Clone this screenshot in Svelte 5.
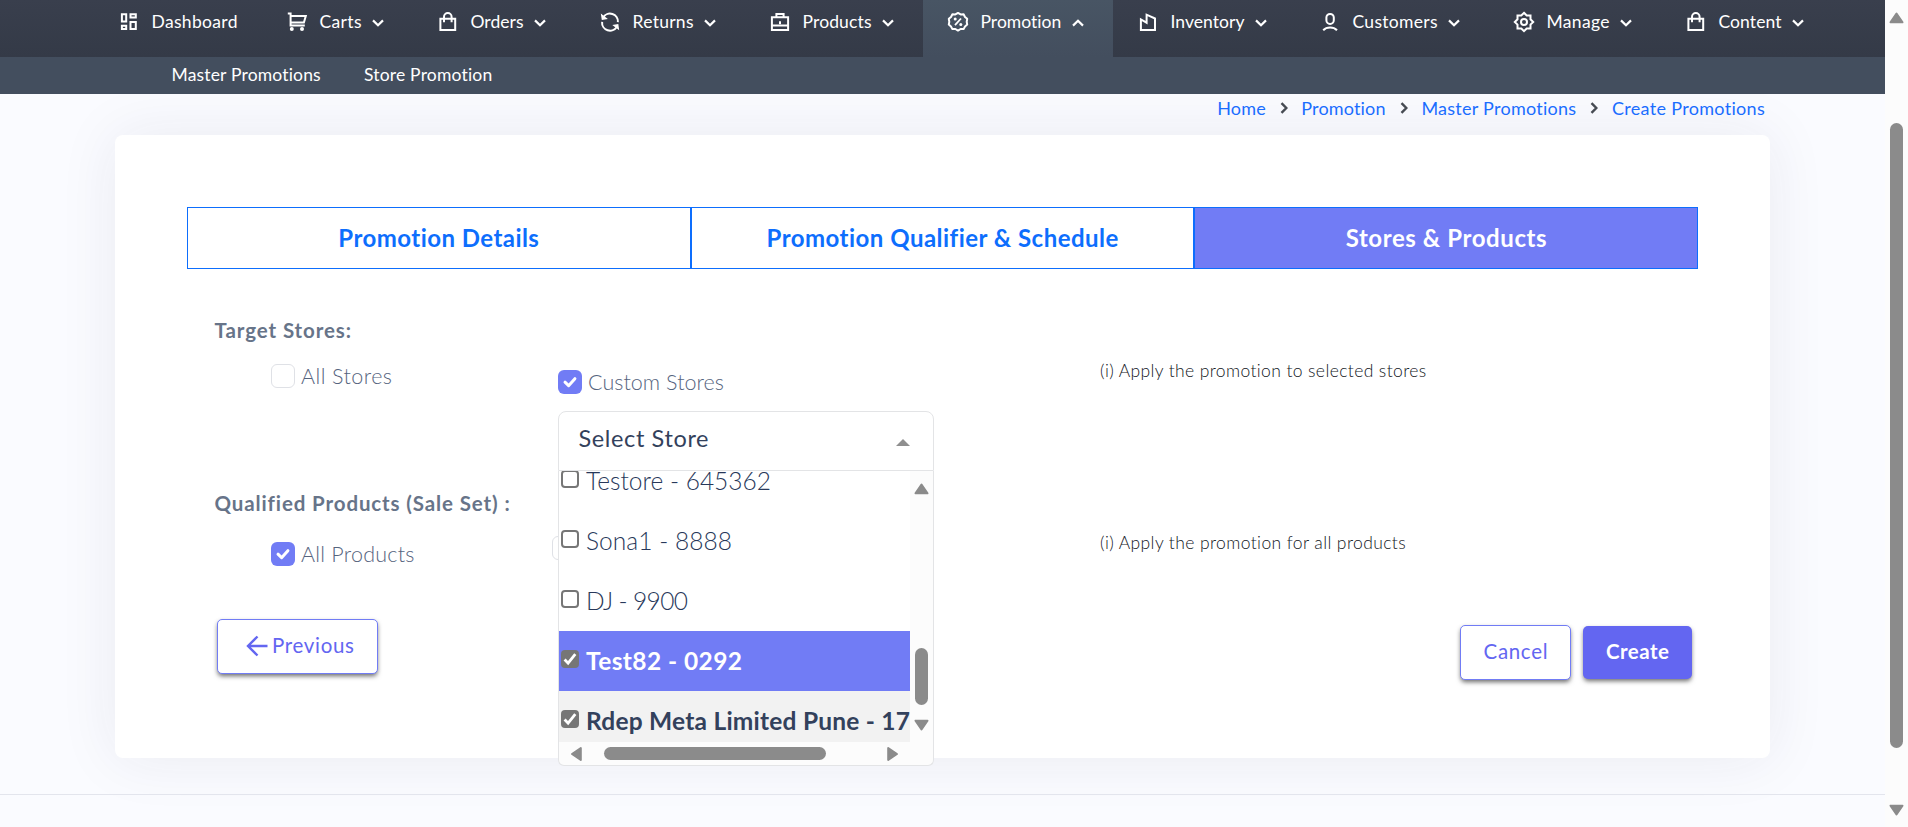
<script>
  const menu = [
    { name: 'Dashboard', icon: 'dashboard', cell: 168, text: 86 },
    { name: 'Carts', icon: 'cart', cell: 151, text: 42, more: true },
    { name: 'Orders', icon: 'bag', cell: 162, text: 53, more: true },
    { name: 'Returns', icon: 'returns', cell: 170, text: 61, more: true },
    { name: 'Products', icon: 'case', cell: 178, text: 69, more: true },
    { name: 'Promotion', icon: 'badge', cell: 190, text: 81, more: true, active: true },
    { name: 'Inventory', icon: 'factory', cell: 182, text: 74, more: true },
    { name: 'Customers', icon: 'user', cell: 194, text: 85, more: true },
    { name: 'Manage', icon: 'gear', cell: 172, text: 63, more: true },
    { name: 'Content', icon: 'bag', cell: 172, text: 63, more: true }
  ];
  const submenu = [
    { name: 'Master Promotions', text: 149.5 },
    { name: 'Store Promotion', text: 128.5 }
  ];
  const crumbs = [
    { name: 'Home', text: 48.5 },
    { name: 'Promotion', text: 84.5 },
    { name: 'Master Promotions', text: 155 },
    { name: 'Create Promotions', text: 153 }
  ];
  const tabs = [
    { name: 'Promotion Details', text: 201 },
    { name: 'Promotion Qualifier & Schedule', text: 352 },
    { name: 'Stores & Products', text: 201, active: true }
  ];
  const stores = [
    { name: 'Testore - 645362', text: 185 },
    { name: 'Sona1 - 8888', text: 146 },
    { name: 'DJ - 9900', text: 102 },
    { name: 'Test82 - 0292', text: 156, checked: true, hot: true },
    { name: 'Rdep Meta Limited Pune - 17', text: 324, checked: true }
  ];

  // Tracks the letters of a label out to the given width.
  function track(node, width) {
    const range = document.createRange();
    range.selectNodeContents(node);
    const natural = range.getBoundingClientRect().width;
    const gaps = node.textContent.length - 1;
    node.style.letterSpacing = ((width - natural) / gaps).toFixed(3) + 'px';
    node.style.width = width + 'px';
  }
</script>

{#snippet label(name, width)}<span class="label" use:track={width}>{name}</span>{/snippet}

{#snippet icon(kind)}
  <svg class="icon" viewBox="0 0 22 22" width="22" height="22" fill="none" stroke="#fff" stroke-width="2">
    {#if kind === 'dashboard'}
      <path d="M3.9 3.3h4.3v7.2H3.900zM12.500 3.300h5.300v3.300h-5.300zM3.900 14.800h4.300v3.200H3.900zM12.500 10.900h5.300v7.100h-5.300z" />
    {:else if kind === 'cart'}
      <path d="M1.8 2.400h2.800v12.100h14.200M5 5h14.800l-1.900 6.600H5" />
      <circle cx="5.800" cy="18.100" r="2" fill="#fff" stroke="none" />
      <circle cx="16" cy="18.100" r="2" fill="#fff" stroke="none" />
    {:else if kind === 'bag'}
      <path d="M3.400 7.700h14.800v11.400H3.400zM7 11.300V5.900a3.800 3.800 0 0 1 7.600 0v5.400" />
    {:else if kind === 'returns'}
      <path d="M4.100 6.400A8 8 0 0 1 18.900 11.200M17.900 15.800A8 8 0 0 1 3.100 10.900" />
      <path d="M1.800 2.500l1 6.500 6.100-1.100zM20.200 19.300l-.9-6.300-6 1z" fill="#fff" stroke="none" />
    {:else if kind === 'case'}
      <path d="M2.900 6.200h16.200v12.900H2.900zM7.400 6V2.900h7.200V6M3 14.400h16" />
      <path d="M11 10.200v3" />
    {:else if kind === 'badge'}
      <path d="M11 1.900l2.600 1.500 3-.1 1.400 2.700 2.200 1.800-.5 3 .5 2.800-2.200 1.900-1.400 2.600-3-.1L11 19.600 8.400 18l-3 .1L4 15.500l-2.200-1.900.5-2.800-.5-3L4 6l1.400-2.700 3 .1z" stroke-linejoin="round" />
      <path d="M14 7.500l-6 6.600" stroke-width="1.800" />
      <circle cx="8.200" cy="8" r="1.500" fill="#fff" stroke="none" />
      <circle cx="13.800" cy="13.600" r="1.500" fill="#fff" stroke="none" />
    {:else if kind === 'factory'}
      <path d="M3.900 19.100V8.400l5.700 3.300V3.700l8.400 3.800v11.600z" />
    {:else if kind === 'user'}
      <rect x="7.400" y="2.900" width="7.400" height="10" rx="3.600" />
      <path d="M4.200 19.300c3.500-3.700 10.300-3.700 13.800 0" />
    {:else}
      <path d="M11 1.800l2.700 2.700h3.800v3.800l2.700 2.700-2.700 2.600v3.900h-3.800L11 20.100l-2.700-2.600H4.500v-3.900L1.800 11l2.700-2.700V4.500h3.800z" />
      <circle cx="11" cy="10.900" r="3" />
    {/if}
  </svg>
{/snippet}

{#snippet box(checked)}
  <span class="box" class:on={checked}>
    {#if checked}
      <svg viewBox="0 0 24 24" width="24" height="24"><path d="M7 12.200l3.600 3.500 6.300-7" fill="none" stroke="#fff" stroke-width="3" stroke-linecap="round" stroke-linejoin="round" /></svg>
    {/if}
  </span>
{/snippet}

{#snippet arrow(dir)}
  <svg class="arrow {dir}" viewBox="0 0 15 12" width="15" height="12"><path d="M7.500 1.500L13.500 10.300H1.500z" fill="#8b8b8b" stroke="#8b8b8b" stroke-width="2" stroke-linejoin="round" /></svg>
{/snippet}

<div class="page">
  <div class="content">
    <nav class="menu">
      {#each menu as m}
        <a class="item" class:active={m.active} style:width="{m.cell}px">
          {@render icon(m.icon)}
          {@render label(m.name, m.text)}
          {#if m.more}
            <svg class="chev" class:up={m.active} viewBox="0 0 12 8" width="12" height="8"><path d="M1 1.400l5 4.800 5-4.800" fill="none" stroke="#fff" stroke-width="2.200" /></svg>
          {/if}
        </a>
      {/each}
    </nav>
    <nav class="submenu">
      {#each submenu as s}{@render label(s.name, s.text)}{/each}
    </nav>

    <div class="crumbs">
      {#each crumbs as c, i}
        {#if i}
          <svg viewBox="0 0 8 12" width="8" height="12"><path d="M1.500 1.200L6.300 6l-4.800 4.800" fill="none" stroke="#464b53" stroke-width="2.400" /></svg>
        {/if}
        {@render label(c.name, c.text)}
      {/each}
    </div>

    <main class="card">
      <div class="tabs">
        {#each tabs as t}
          <div class="tab" class:active={t.active}>{@render label(t.name, t.text)}</div>
        {/each}
      </div>

      <section class="targets">
        <h4>{@render label('Target Stores:', 136.500)}</h4>
        <div class="options">
          <div class="choice first">{@render box(false)}{@render label('All Stores', 91)}</div>
          <div class="custom">
            <div class="choice">{@render box(true)}{@render label('Custom Stores', 136)}</div>
            <div class="select">
              <div class="head">
                {@render label('Select Store', 130)}
                <i class="caret"></i>
              </div>
              <div class="drop">
                <div class="list">
                  {#each stores as s}
                    <div class="store" class:checked={s.checked} class:hot={s.hot}>
                      <span class="tick">
                        {#if s.checked}
                          <svg viewBox="0 0 18 18" width="18" height="18"><path d="M3.600 9.600l3.500 3.600 7.200-9" fill="none" stroke="#fff" stroke-width="2.800" /></svg>
                        {/if}
                      </span>
                      {@render label(s.name, s.text)}
                    </div>
                  {/each}
                </div>
                <div class="vbar">{@render arrow('up')}<i></i>{@render arrow('down')}</div>
                <div class="hbar">{@render arrow('left')}<i></i>{@render arrow('right')}</div>
              </div>
            </div>
          </div>
          <p>{@render label('(i) Apply the promotion to selected stores', 326.500)}</p>
        </div>
      </section>

      <section class="products">
        <h4>{@render label('Qualified Products (Sale Set) :', 295)}</h4>
        <div class="options">
          <div class="choice first">{@render box(true)}{@render label('All Products', 113.500)}</div>
          <div class="custom">{@render box(false)}</div>
          <p>{@render label('(i) Apply the promotion for all products', 306)}</p>
        </div>
      </section>

      <div class="actions">
        <button class="previous">
          <svg viewBox="0 0 22 22" width="22" height="22"><path d="M21.500 11H2M11.500 1.500L2 11l9.500 9.500" fill="none" stroke="#6366f1" stroke-width="2.400" /></svg>
          {@render label('Previous', 82)}
        </button>
        <button class="cancel">{@render label('Cancel', 64)}</button>
        <button class="create">{@render label('Create', 63)}</button>
      </div>
    </main>
    <footer></footer>
  </div>
  <aside class="scroll">{@render arrow('up')}<i></i>{@render arrow('down')}</aside>
</div>

<style>
  :global(body) { margin: 0; overflow: hidden; }
  .page, .page * { box-sizing: border-box; }
  .page { display: flex; width: 1908px; height: 827px; overflow: hidden; font-family: Lato, "Open Sans", sans-serif; background: #fafbff; }
  .content { width: 1885px; display: flex; flex-direction: column; }
  .label { display: inline-block; white-space: nowrap; flex: none; }

  .menu { height: 57px; flex: none; display: flex; padding-left: 94px; background: linear-gradient(#393f4d, #343a47); position: relative; z-index: 2; }
  .item { display: flex; align-items: flex-start; padding: 11px 0 0 24px; color: #fff; font-size: 17.5px; line-height: 22px; }
  .item.active { background: linear-gradient(#485564, #434e5e); }
  .icon { flex: none; margin-right: 11.5px; }
  .chev { flex: none; margin: 8px 0 0 10.5px; }
  .chev.up { transform: rotate(180deg); }
  .submenu { height: 37px; flex: none; display: flex; gap: 43px; padding-left: 171.5px; background: #434e5e; color: #fff; font-size: 17.5px; line-height: 35px; position: relative; z-index: 2; }

  .crumbs { height: 41px; flex: none; display: flex; align-items: center; justify-content: flex-end; gap: 13.8px; padding: 0 120px 14px 0; color: #1a6dff; font-size: 18px; position: relative; z-index: 1; }

  .card { width: 1655px; height: 623px; flex: none; margin-left: 115px; padding: 72px 72px 0 72px; background: #fff; border-radius: 8px; box-shadow: 0 0 60px rgba(40, 40, 80, 0.08); }
  .tabs { display: grid; grid-template-columns: repeat(3, 1fr); height: 62px; }
  .tab { border: 1px solid #0d6efd; display: flex; align-items: center; justify-content: center; padding-bottom: 2px; color: #0d6efd; font-size: 24px; font-weight: 700; }
  .tab.active { background: #717cf5; color: #fff; }

  section { padding-left: 27.5px; }
  .targets { margin-top: 49px; height: 172px; }
  .products { height: 129px; padding-top: 1px; }
  h4 { margin: 0; height: 23px; font-size: 20.5px; line-height: 24px; font-weight: 700; color: #677489; }
  .options { display: grid; grid-template-columns: 343.5px 542px 1fr; align-items: start; }
  .choice { display: flex; gap: 6px; height: 24px; font-size: 21.5px; line-height: 25px; font-weight: 300; color: #56647e; }
  .targets .first { margin: 23px 0 0 56.5px; }
  .targets .custom { margin-top: 29px; }
  .products .first { margin: 28px 0 0 56.5px; }
  .products .custom { margin: 22px 0 0 -6px; }
  .box { display: block; flex: none; width: 24px; height: 24px; border: 1px solid #dfe1e6; border-radius: 6px; background: #fff; }
  .box.on { border: 0; background: #717cf5; }
  .box svg { display: block; }
  p { margin: 20px 0 0; font-size: 17.5px; line-height: 20px; font-weight: 300; color: #12161c; }
  .products p { margin-top: 19px; }

  .select { position: relative; width: 376px; margin-top: 17px; }
  .head { height: 60px; display: flex; align-items: flex-start; justify-content: space-between; padding: 11px 23px 0 19.5px; border: 1px solid #e3e4e6; border-radius: 8px 8px 0 0; font-size: 23.5px; line-height: 30px; color: #33415c; background: #fff; }
  .caret { margin-top: 16px; border: 7px solid transparent; border-top: 0; border-bottom-color: #8f8f8f; }
  .drop { position: absolute; z-index: 3; top: 60px; left: 0; width: 376px; height: 295px; display: grid; grid-template-columns: 351px 23px; grid-template-rows: 271px 23px; border: 1px solid #e3e4e6; border-top: 0; border-radius: 0 0 6px 6px; background: #fcfcfc; }
  .list { display: flex; flex-direction: column; justify-content: flex-start; overflow: hidden; background: #fff; }
  .store { flex: none; height: 60px; display: flex; gap: 7px; padding: 15px 0 0 2px; font-size: 24.5px; line-height: 30px; font-weight: 300; color: #28385a; }
  .store:first-child { margin-top: -20px; }
  .store.checked { font-weight: 700; color: #33415c; background: #f2f2f2; }
  .store.checked.hot { color: #fff; background: #717cf5; }
  .tick { flex: none; width: 18px; height: 18px; margin-top: 4px; border: 2px solid #767676; border-radius: 4px; background: #fff; }
  .checked .tick { border: 0; background: #767676; }
  .tick svg { display: block; }
  .vbar { display: flex; flex-direction: column; align-items: center; padding: 12px 1px 11px 0; }
  .vbar i { width: 13px; height: 57px; margin: auto 0 14px; border-radius: 7px; background: #8b8b8b; }
  .hbar { display: flex; align-items: center; padding: 1px 10px 1px; }
  .hbar i { width: 222px; height: 13px; margin: 0 auto 0 20px; border-radius: 7px; background: #8b8b8b; }
  .arrow { display: block; flex: none; }
  .arrow.down { transform: rotate(180deg); }
  .arrow.left { transform: rotate(-90deg); }
  .arrow.right { transform: rotate(90deg); }

  .actions { display: flex; align-items: flex-start; padding: 0 6px 0 30px; }
  button { display: flex; align-items: center; justify-content: center; padding: 0 0 3px; font: 400 20.5px/24px Lato, "Open Sans", sans-serif; color: #6366f1; background: #fff; border: 1px solid #717cf5; border-radius: 5px; box-shadow: 0 3px 5px -1px rgba(0, 0, 0, 0.55), 0 1px 4px rgba(0, 0, 0, 0.1); }
  .previous { width: 161px; height: 55px; gap: 4px; padding-left: 5px; }
  .previous svg { margin-top: 2px; }
  .cancel { width: 111px; height: 55px; margin: 6px 0 0 auto; }
  .create { width: 109px; height: 53px; margin: 7px 0 0 12px; color: #fff; font-weight: 700; background: #6366f1; border: 0; }

  footer { margin-top: 36px; border-top: 1px solid #e3e5ed; flex: 1; }
  .scroll { width: 23px; display: flex; flex-direction: column; align-items: center; padding: 12px 0 11px; background: #fcfcfc; }
  .scroll i { width: 13px; height: 625px; margin: 99px 0 auto; border-radius: 7px; background: #8b8b8b; }
</style>
